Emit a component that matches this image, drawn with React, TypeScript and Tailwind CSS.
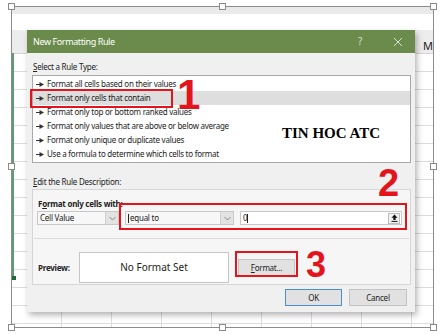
import React from "react";

const ui = "font-['Noto_Sans',sans-serif]";

const ruleTypes = [
  "Format all cells based on their values",
  "Format only cells that contain",
  "Format only top or bottom ranked values",
  "Format only values that are above or below average",
  "Format only unique or duplicate values",
  "Use a formula to determine which cells to format",
];

function Handle({ className }: { className: string }) {
  return (
    <div
      className={`absolute w-[7px] h-[7px] bg-white border border-[#8a8a8a] z-20 ${className}`}
    />
  );
}

function Bullet() {
  return (
    <svg width="8" height="5" viewBox="0 0 8 5" className="shrink-0">
      <path d="M0 2.5h4" stroke="#333" strokeWidth="1" />
      <path d="M3.5 0L8 2.5L3.5 5Z" fill="#333" />
    </svg>
  );
}

function Chevron() {
  return (
    <svg width="7" height="5" viewBox="0 0 7 5">
      <path d="M0.5 1l3 3 3-3" fill="none" stroke="#7a7a7a" strokeWidth="0.9" />
    </svg>
  );
}

function Combo({ width, text, caret }: { width: string; text: string; caret?: boolean }) {
  return (
    <div className={`${width} h-[14px] flex border border-[#c8c8c8] bg-[#f7f7f7]`}>
      <div className="flex-1 flex items-center pl-[2px] text-[#222]">
        {caret && <span className="w-px h-[9px] bg-[#222] mr-px" />}
        {text}
      </div>
      <div className="w-[13px] flex items-center justify-center bg-[#e3e3e3] border-l border-[#d0d0d0]">
        <Chevron />
      </div>
    </div>
  );
}

function Button({ width, children, primary }: { width: string; children: React.ReactNode; primary?: boolean }) {
  return (
    <div
      className={`${width} h-[17px] flex items-center justify-center bg-[#e1e1e1] text-[#222] border ${
        primary ? "border-[#4a8fd6]" : "border-[#c4c4c4]"
      }`}
    >
      {children}
    </div>
  );
}

function Dialog() {
  return (
    <div className={`absolute left-[15px] top-[23px] w-[388px] h-[282px] flex flex-col bg-[#f0f0f0] shadow-[2px_3px_6px_rgba(0,0,0,0.3)] ${ui}`}>
      <div className="h-[23px] shrink-0 flex items-center bg-[#6a8b4c] pl-[6px] text-[9px] tracking-[-0.4px] text-white">
        <span className="flex-1">New Formatting Rule</span>
        <span className="w-[10px] text-[10px] text-[#d8e3cf] mr-[25px]">?</span>
        <svg width="10" height="10" viewBox="0 0 10 10" className="mr-[12px]">
          <path d="M1 1l8 8M9 1l-8 8" stroke="#d8e3cf" strokeWidth="1" />
        </svg>
      </div>

      <div className="flex flex-col px-[5px] pr-[4px] text-[8px] tracking-[-0.25px] text-[#222]">
        <div className="h-[22px] flex items-end pb-[3px] pl-px leading-[10px]">
          <span>
            <span className="underline">S</span>elect a Rule Type:
          </span>
        </div>
        <div className="h-[88px] border border-[#a9a9a9] bg-white pt-px">
          {ruleTypes.map((r, i) => (
            <div
              key={r}
              className={`h-[14px] flex items-center gap-[3px] pl-[3px] ${i === 1 ? "bg-[#dedede]" : ""}`}
            >
              <Bullet />
              <span>{r}</span>
            </div>
          ))}
        </div>
        <div className="h-[26px] flex items-end pb-[2px] pl-px leading-[10px]">
          <span>
            <span className="underline">E</span>dit the Rule Description:
          </span>
        </div>
        <div className="h-[96px] border border-[#d6d6d6] bg-[#f6f6f6] flex flex-col">
          <div className="h-[20px] flex items-end pl-[5px] font-bold leading-[10px] pb-[1px]">
            F<span className="underline">o</span>rmat only cells with:
          </div>
          <div className="flex items-center gap-[6px] pl-[4px] mt-[1px]">
            <Combo width="w-[82px]" text="Cell Value" />
            <Combo width="w-[109px]" text="equal to" caret />
            <div className="w-[162px] h-[14px] flex items-center border border-[#c8c8c8] bg-white pl-[2px] pr-px">
              <span className="flex-1 flex items-center">
                0<span className="w-px h-[9px] bg-[#222]" />
              </span>
              <div className="w-[12px] h-[11px] flex items-center justify-center border border-[#bdbdbd] bg-[#f2f2f2]">
                <svg width="7" height="8" viewBox="0 0 7 8">
                  <path d="M3.5 0.5L6.5 3.8H4.6V6H2.4V3.8H0.5Z" fill="#111" />
                  <path d="M0.5 7.4h6" stroke="#111" strokeWidth="1" />
                </svg>
              </div>
            </div>
          </div>
          <div className="mt-[13px] mx-[1px] h-px bg-[#dcdcdc]" />
          <div className="flex items-center mt-[13px]">
            <span className="w-[46px] pl-[5px] font-bold">Preview:</span>
            <div className="w-[150px] h-[31px] flex items-center justify-center bg-white border border-[#c6c6c6] text-[10px] tracking-normal">
              No Format Set
            </div>
            <div className="ml-[9px]">
              <Button width="w-[57px]">
                <span>
                  <span className="underline">F</span>ormat...
                </span>
              </Button>
            </div>
          </div>
        </div>
        <div className="flex justify-end gap-[7px] pr-[4px] mt-[4px]">
          <Button width="w-[57px]" primary>
            OK
          </Button>
          <Button width="w-[58px]">Cancel</Button>
        </div>
      </div>

      {/* annotations */}
      <div className="absolute left-[3px] top-[59px] w-[143px] h-[19px] border-2 border-[#e3141c]" />
      <div className="absolute left-[92px] top-[173px] w-[288px] h-[27px] border-2 border-[#e3141c]" />
      <div className="absolute left-[208px] top-[221px] w-[63px] h-[26px] border-2 border-[#e3141c]" />
      <div className="absolute left-[150px] top-[50px] text-[42px] leading-[30px] font-bold text-[#e3141c] font-['Liberation_Sans',sans-serif]">
        1
      </div>
      <div className="absolute left-[351px] top-[140px] text-[38px] leading-[27px] font-bold text-[#e3141c] font-['Liberation_Sans',sans-serif]">
        2
      </div>
      <div className="absolute left-[279px] top-[222px] text-[36px] leading-[26px] font-bold text-[#e3141c] font-['Liberation_Sans',sans-serif]">
        3
      </div>
      <div className="absolute left-[255px] top-[94px] text-[15px] leading-[18px] font-bold text-black font-['Liberation_Serif',serif]">
        TIN HOC ATC
      </div>
    </div>
  );
}

export default function App() {
  return (
    <div className="w-[442px] h-[334px] bg-white pt-[6px] pl-[11px]">
      <div className="relative w-[423px] h-[322px] border border-[#8c8c8c]">
        <div className="relative w-full h-full overflow-hidden flex flex-col">
          <div className="h-[7px] bg-[#eaeaea]" />
          <div className="h-[16px] bg-white" />
          <div className="h-[24px] flex items-end bg-[#ededed] border-b border-[#d6d6d6] pl-[411px] pb-[2px] text-[11px] text-[#222] font-['Noto_Sans',sans-serif] leading-none">
            M
          </div>
          <div className="flex-1 bg-[image:repeating-linear-gradient(to_bottom,transparent_0,transparent_17px,#dcdcdc_17px,#dcdcdc_18px),repeating-linear-gradient(to_right,transparent_0,transparent_49px,#dcdcdc_49px,#dcdcdc_50px)]" />
          <div className="absolute left-0 top-[46px] w-[2px] h-[225px] bg-[#5f9a73]" />
          <div className="absolute left-0 top-[269px] w-[4px] h-[4px] bg-[#1f6b3f]" />
          <Dialog />
        </div>
        <Handle className="-left-[4px] -top-[4px]" />
        <Handle className="left-[207px] -top-[4px]" />
        <Handle className="-right-[4px] -top-[4px]" />
        <Handle className="-left-[4px] top-[156px]" />
        <Handle className="-right-[4px] top-[156px]" />
        <Handle className="-left-[4px] -bottom-[4px]" />
        <Handle className="left-[207px] -bottom-[4px]" />
        <Handle className="-right-[4px] -bottom-[4px]" />
      </div>
    </div>
  );
}
